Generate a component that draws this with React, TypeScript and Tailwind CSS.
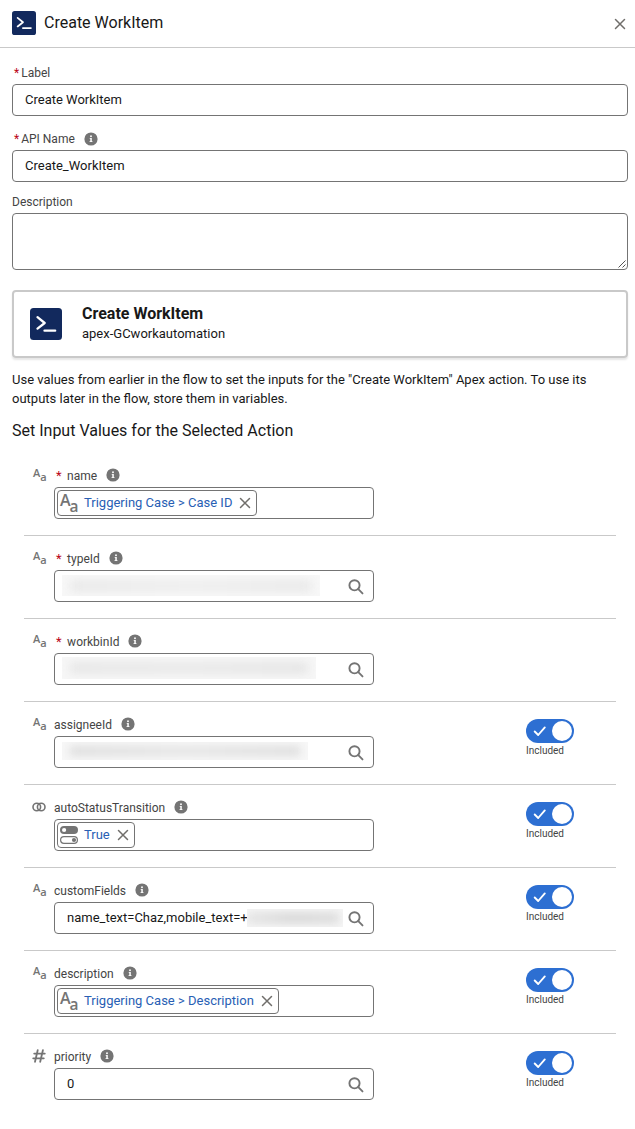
import React from "react";

type Kind = "text" | "boolean" | "number";

interface Param {
  name: string;
  kind: Kind;
  required?: boolean;
  optional?: boolean;
  pill?: string;
  value?: string;
  mask?: React.ReactNode;
}

function ApexIcon({ className }: { className: string }) {
  return (
    <svg viewBox="0 0 32 32" className={className} fill="none" stroke="#fff" strokeWidth="2.3">
      <rect width="32" height="32" rx="3.5" fill="#12295d" stroke="none" />
      <path d="M7.5 9.2l7.2 5.8-7.2 5.6" strokeLinecap="round" strokeLinejoin="round" />
      <path d="M14.5 22.7h10.7" strokeLinecap="round" />
    </svg>
  );
}

function InfoIcon() {
  return (
    <svg viewBox="0 0 14 14" className="h-3.5 w-3.5 shrink-0">
      <circle cx="7" cy="7" r="6.6" fill="#747474" />
      <circle cx="7" cy="4.2" r="0.95" fill="#fff" />
      <path d="M5.7 6h2.1v3.3h.7v.8h-3v-.8h.8V6.8h-.6z" fill="#fff" />
    </svg>
  );
}

function CloseIcon({ className }: { className: string }) {
  return (
    <svg viewBox="0 0 12 12" className={className} fill="none" stroke="#706e6b" strokeWidth="1.5" strokeLinecap="round">
      <path d="M1.5 1.5l9 9M10.5 1.5l-9 9" />
    </svg>
  );
}

function SearchIcon() {
  return (
    <svg viewBox="0 0 16 16" className="mt-0.5 h-4 w-4 shrink-0" fill="none" stroke="#747474" strokeWidth="1.9" strokeLinecap="round">
      <circle cx="6.5" cy="6.3" r="5.1" />
      <path d="M10.3 10.2l4.2 4.2" />
    </svg>
  );
}

function KindIcon({ kind }: { kind: Kind }) {
  if (kind === "boolean") {
    return (
      <svg viewBox="0 0 14 10" className="mt-[17px] h-2.5 w-3.5" fill="none" stroke="#747474" strokeWidth="1.6">
        <circle cx="4.8" cy="5" r="3.8" />
        <circle cx="9.2" cy="5" r="3.8" />
      </svg>
    );
  }
  if (kind === "number") {
    return (
      <svg viewBox="0 0 14 14" className="mt-[15px] h-3.5 w-3.5" fill="none" stroke="#747474" strokeWidth="1.8" strokeLinecap="round">
        <path d="M5.7 1.2L3 12.8M10.9 1.2L8.2 12.8M2.2 4.6h10.6M1.2 9.3h10.6" />
      </svg>
    );
  }
  return (
    <span className="mt-[15px] ml-px flex h-3.5 w-3.5 font-['Open_Sans',sans-serif] text-[#747474]">
      <span className="-mt-px text-[11px] leading-[12px] font-semibold">A</span>
      <span className="mt-[3px] text-[11px] leading-[12px] font-semibold">a</span>
    </span>
  );
}

function PillIcon({ kind }: { kind: Kind }) {
  if (kind === "boolean") {
    return (
      <svg viewBox="0 0 18 18" className="h-[18px] w-[18px]">
        <rect width="18" height="8" rx="4" fill="#747474" />
        <circle cx="4.1" cy="4" r="2.1" fill="#fff" />
        <rect x=".6" y="10.6" width="16.8" height="6.8" rx="3.4" fill="#fff" stroke="#747474" strokeWidth="1.2" />
        <circle cx="14" cy="14" r="2.1" fill="#747474" />
      </svg>
    );
  }
  return (
    <span className="flex h-[18px] w-[18px] font-['Open_Sans',sans-serif] text-[#747474]">
      <span className="-mt-[3px] text-[16px] leading-[18px] font-semibold">A</span>
      <span className="mt-[3px] -ml-px text-[15.5px] leading-[18px] font-semibold">a</span>
    </span>
  );
}

function Included() {
  return (
    <div className="ml-[152px] flex flex-col pt-[17px]">
      <div className="flex h-6 w-12 items-center justify-between rounded-full bg-[#2d6fd2] pr-0.5 pl-[7px]">
        <svg viewBox="0 0 14 12" className="h-3 w-3.5" fill="none" stroke="#fff" strokeWidth="1.9" strokeLinecap="round" strokeLinejoin="round">
          <path d="M1.7 6.5l3.5 3.5 6.6-7.6" />
        </svg>
        <span className="h-5 w-5 rounded-full bg-white" />
      </div>
      <span className="text-[10px] leading-[15px] text-[#444]">Included</span>
    </div>
  );
}

function ParamRow({ p, last }: { p: Param; last: boolean }) {
  return (
    <div className={`flex h-[83px] border-[#c9c9c9] pl-2 ${last ? "" : "border-b"}`}>
      <div className="w-[22px] shrink-0">
        <KindIcon kind={p.kind} />
      </div>
      <div className="w-80">
        <div className="flex h-[34px] items-center text-[12px] text-[#444]">
          {p.required && <span className="mt-3 mr-[5.5px] ml-[2px] text-[13px] text-[#ba0517]">*</span>}
          <span className="mt-3">{p.name}</span>
          <span className="mt-2.5 ml-[9px]">
            <InfoIcon />
          </span>
        </div>
        {p.pill ? (
          <div className="flex h-8 rounded border border-[#747474] p-0.5">
            <div className="flex h-[26px] items-center rounded border border-[#747474] pr-[5px] pl-0.5">
              <PillIcon kind={p.kind} />
              <span className="ml-1.5 text-[13px] text-[#2860b4]">{p.pill}</span>
              <CloseIcon className="ml-[7px] h-3 w-3" />
            </div>
          </div>
        ) : (
          <div className="flex h-8 items-center rounded border border-[#747474] pr-[9px]">
            {p.value && <span className="pb-px pl-3 text-[13px] whitespace-nowrap text-[#181818]">{p.value}</span>}
            {p.mask}
            <span className="ml-auto">
              <SearchIcon />
            </span>
          </div>
        )}
      </div>
      {p.optional && <Included />}
    </div>
  );
}

const params: Param[] = [
  { name: "name", kind: "text", required: true, pill: "Triggering Case > Case ID" },
  {
    name: "typeId",
    kind: "text",
    required: true,
    mask: (
      <div className="mb-px ml-[7px] flex h-[21px] w-[258px] items-center overflow-hidden bg-[#f8f8f8] px-2">
        <div className="h-3 w-full bg-linear-to-r from-[#e9e9e9] via-[#eeeeee] to-[#e9e9e9] blur-[5px]" />
      </div>
    ),
  },
  {
    name: "workbinId",
    kind: "text",
    required: true,
    mask: (
      <div className="mb-[3px] ml-[7px] flex h-[22px] w-[254px] items-center overflow-hidden bg-[#f7f7f7] px-2">
        <div className="h-3 w-full bg-linear-to-r from-[#e7e7e7] via-[#e9e9e9] to-[#e5e5e5] blur-[5px]" />
      </div>
    ),
  },
  {
    name: "assigneeId",
    kind: "text",
    optional: true,
    mask: (
      <div className="mb-[3px] ml-[7px] flex h-[18px] w-[246px] items-center overflow-hidden bg-[#f7f7f7] px-2">
        <div className="h-2.5 w-full bg-linear-to-r from-[#dedede] via-[#e5e5e5] to-[#dedede] blur-[4px]" />
      </div>
    ),
  },
  { name: "autoStatusTransition", kind: "boolean", optional: true, pill: "True" },
  {
    name: "customFields",
    kind: "text",
    optional: true,
    value: "name_text=Chaz,mobile_text=+",
    mask: (
      <div className="mb-px -ml-px flex h-[18px] w-24 items-center overflow-hidden bg-[#f5f5f5] pr-1">
        <div className="h-2.5 w-full bg-linear-to-r from-[#e4e4e4] via-[#d6d6d6] to-[#dcdcdc] blur-[4px]" />
      </div>
    ),
  },
  { name: "description", kind: "text", optional: true, pill: "Triggering Case > Description" },
  { name: "priority", kind: "number", optional: true, value: "0" },
];

export default function App() {
  return (
    <main className="h-[1129px] w-[635px] overflow-hidden bg-white font-[Roboto,sans-serif] text-[#181818]">
      <header className="flex h-12 items-center border-b border-[#c9c9c9] pr-[9px] pb-[2px] pl-3">
        <ApexIcon className="h-6 w-6" />
        <h1 className="ml-2 text-[16px] leading-5">Create WorkItem</h1>
        <CloseIcon className="mt-[2px] ml-auto h-3 w-3" />
      </header>

      <section className="pr-[7px] pl-3">
        <div className="flex h-9 items-end pb-[2px] pl-[2px] text-[12px] leading-[18px] text-[#444]">
          <span className="mr-[2px] text-[#ba0517]">*</span>Label
        </div>
        <div className="flex h-8 items-center rounded border border-[#747474] px-3 pb-px text-[13px]">Create WorkItem</div>

        <div className="flex h-[34px] items-end pb-[2px] pl-[2px] text-[12px] leading-[18px] text-[#444]">
          <span className="mr-[2px] text-[#ba0517]">*</span>API Name
          <span className="mb-[2px] ml-[9px]">
            <InfoIcon />
          </span>
        </div>
        <div className="flex h-8 items-center rounded border border-[#747474] px-3 pb-px text-[13px]">Create_WorkItem</div>

        <div className="flex h-[31px] items-end pb-[2px] text-[12px] leading-[18px] text-[#444]">Description</div>
        <div className="flex h-[57px] items-end justify-end rounded border border-[#747474] p-px">
          <svg viewBox="0 0 8 8" className="h-2 w-2" stroke="#555" strokeWidth="1" fill="none">
            <path d="M.5 7.5l7-7M4.5 7.5l3-3" />
          </svg>
        </div>

        <div className="mt-5 flex h-[68px] rounded border-2 border-[#c9c9c9] pt-4 pl-4 shadow-[0_2px_2px_rgba(0,0,0,0.1)]">
          <ApexIcon className="h-8 w-8" />
          <div className="-mt-1 ml-5">
            <h2 className="text-[16px] leading-5 font-bold">Create WorkItem</h2>
            <p className="text-[13px] leading-5">apex-GCworkautomation</p>
          </div>
        </div>

        <p className="mt-3 text-[13px] leading-[19px]">
          Use values from earlier in the flow to set the inputs for the "Create WorkItem" Apex action. To use its
          outputs later in the flow, store them in variables.
        </p>
        <h2 className="mt-[13px] text-[16px] leading-5">Set Input Values for the Selected Action</h2>
      </section>

      <section className="mt-3 mr-[19px] ml-6">
        {params.map((p, i) => (
          <ParamRow key={p.name} p={p} last={i === params.length - 1} />
        ))}
      </section>
    </main>
  );
}
